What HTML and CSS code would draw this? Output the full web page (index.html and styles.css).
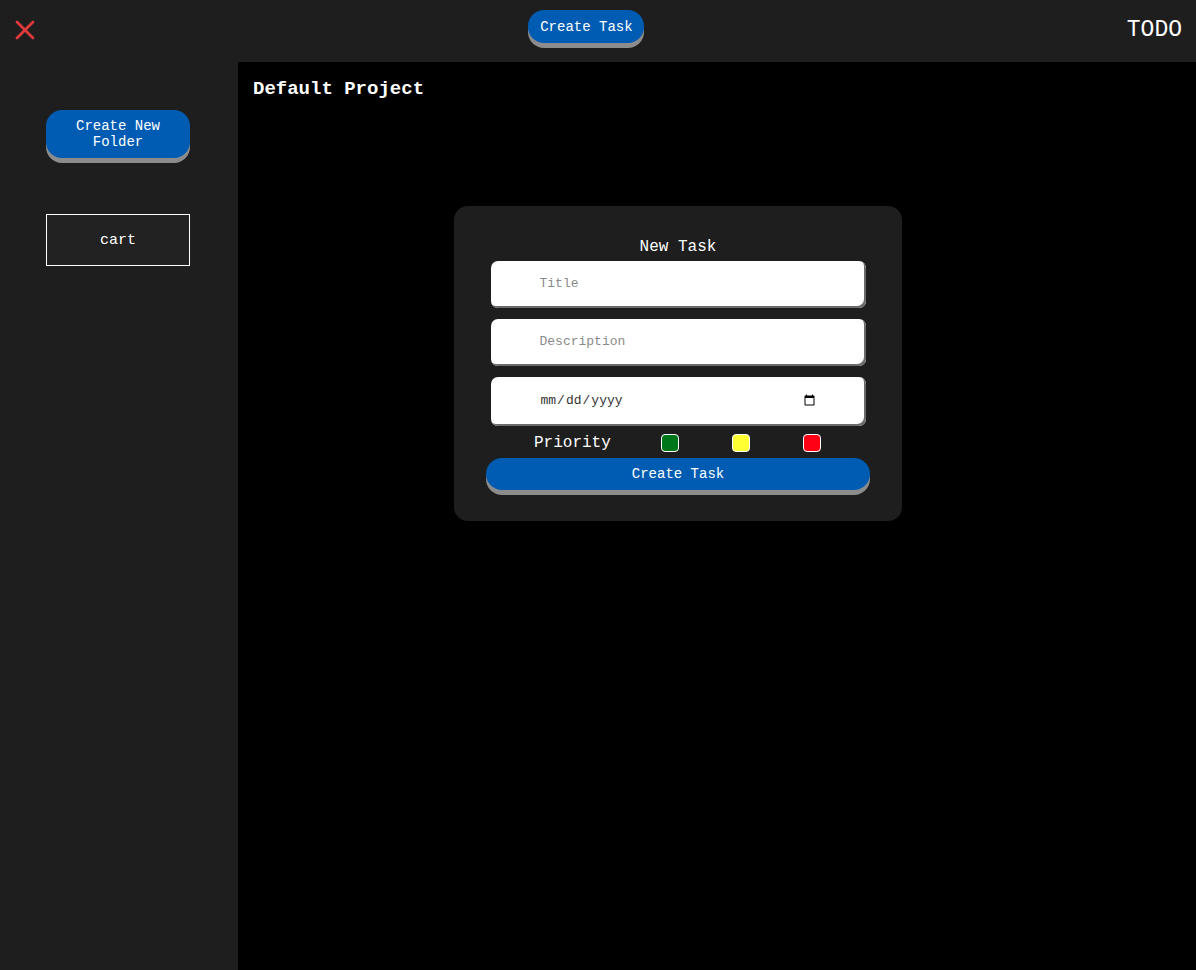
FILE: index.html
```html
<!DOCTYPE html>
<html lang="en">
<head>
<meta charset="utf-8">
<title>TODO</title>
<link rel="stylesheet" href="styles.css">
</head>
<body>
<header class="topbar">
  <button class="close-btn" aria-label="Close">
    <svg width="20" height="20" viewBox="0 0 20 20"><path d="M2 2 L18 18 M18 2 L2 18" stroke="#e0393c" stroke-width="2.8" stroke-linecap="round"/></svg>
  </button>
  <button class="btn btn-top">Create Task</button>
  <div class="brand">TODO</div>
</header>
<div class="layout">
  <aside class="sidebar">
    <button class="btn btn-folder">Create New Folder</button>
    <div class="folder">cart</div>
  </aside>
  <main class="main">
    <h1 class="project-title">Default Project</h1>
    <form class="modal">
      <div class="modal-title">New Task</div>
      <input class="field" type="text" placeholder="Title">
      <input class="field" type="text" placeholder="Description">
      <input class="field field-date" type="date">
      <div class="priority">
        <span class="priority-label">Priority</span>
        <input class="prio prio-green" type="checkbox">
        <input class="prio prio-yellow" type="checkbox">
        <input class="prio prio-red" type="checkbox">
      </div>
      <button type="button" class="btn btn-submit">Create Task</button>
    </form>
  </main>
</div>
</body>
</html>
```
FILE: styles.css
```css
* { box-sizing: border-box; }
html, body { margin: 0; padding: 0; }
body {
  background: #000;
  color: #fff;
  font-family: "Liberation Mono", "Courier New", monospace;
  height: 970px;
  overflow: hidden;
  display: flex;
  flex-direction: column;
}
.topbar {
  height: 62px;
  flex: 0 0 62px;
  background: #1e1e1e;
  display: flex;
  justify-content: space-between;
  align-items: flex-start;
  padding: 0 14px 0 10px;
}
.close-btn {
  width: 36px;
  height: 36px;
  margin-top: 12px;
  background: none;
  border: none;
  padding: 0 0 0 5px;
  display: flex;
  align-items: center;
  justify-content: flex-start;
}
.btn {
  font-family: "Liberation Mono", "Courier New", monospace;
  color: #fff;
  background: #005cb3;
  border: none;
  box-shadow: 0 5px 0 #8c8c8c;
  font-size: 14px;
  cursor: pointer;
}
.btn-top {
  margin-top: 10px;
  width: 116px;
  height: 33px;
  border-radius: 16px;
  padding: 0;
}
.brand {
  margin-top: 16px;
  font-size: 23px;
  line-height: 28px;
}
.layout {
  flex: 1;
  display: flex;
}
.sidebar {
  width: 238px;
  flex: 0 0 238px;
  background: #1e1e1e;
  padding: 48px 0 0 46px;
  display: flex;
  flex-direction: column;
  gap: 56px;
}
.btn-folder {
  width: 144px;
  height: 48px;
  border-radius: 16px;
  line-height: 16px;
  padding: 0 18px;
}
.folder {
  width: 144px;
  height: 52px;
  border: 1px solid #fff;
  background: #222;
  display: flex;
  align-items: center;
  justify-content: center;
  font-size: 15px;
}
.main {
  flex: 1;
  padding: 15px 15px;
}
.project-title {
  margin: 0;
  font-size: 19px;
  font-weight: bold;
  line-height: 24px;
}
.modal {
  margin: 105px 0 0 201px;
  width: 448px;
  height: 315px;
  background: #1e1e1e;
  border-radius: 14px;
  padding: 31px 0 0;
  display: flex;
  flex-direction: column;
  align-items: center;
}
.modal-title {
  font-size: 16px;
  line-height: 20px;
  margin-bottom: 4px;
}
.field {
  width: 375px;
  height: 47px;
  flex: 0 0 auto;
  border: none;
  border-radius: 7px;
  background: #fff;
  box-shadow: inset -2px -2px 0 #6b6b6b;
  padding: 0 48px 2px 49px;
  font-family: "Liberation Mono", "Courier New", monospace;
  font-size: 13px;
  color: #333;
  margin-bottom: 11px;
  outline: none;
}
.field::placeholder { color: #8a8a8a; }
.field-date { height: 49px; margin-bottom: 8px; color: #333; }
.priority {
  width: 300px;
  margin-left: 12px;
  display: flex;
  align-items: center;
  height: 18px;
  margin-bottom: 6px;
}
.priority-label {
  font-size: 16px;
  margin-right: 50px;
}
.prio {
  appearance: none;
  -webkit-appearance: none;
  width: 18px;
  height: 18px;
  margin: 0 53px 0 0;
  border: 1px solid #fff;
  border-radius: 4px;
}
.prio-green { background: #00761a; }
.prio-yellow { background: #ffff33; }
.prio-red { background: #ff0015; margin-right: 0; }
.btn-submit {
  width: 384px;
  height: 32px;
  border-radius: 16px;
  padding: 0;
}
```
